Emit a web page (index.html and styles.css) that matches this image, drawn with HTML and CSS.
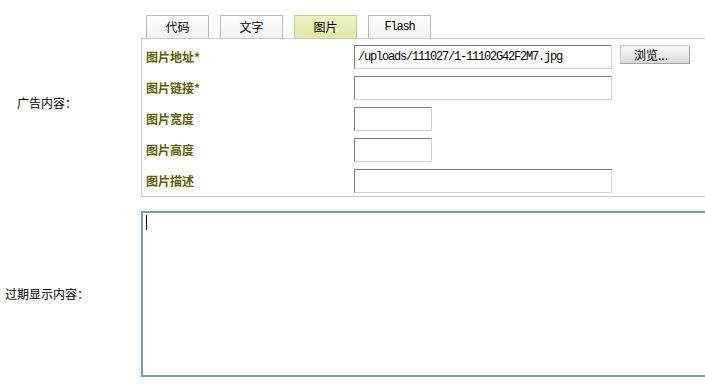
FILE: index.html
```html
<!DOCTYPE html>
<html lang="zh-CN">
<head>
  <meta charset="UTF-8" />
  <title>广告内容</title>
  <link rel="stylesheet" href="styles.css">
</head>
<body>
  <div class="form">
    <div class="row row-ad">
      <div class="label">广告内容：</div>
      <div class="field">
        <!-- tab switch -->
        <div class="tabs">
          <span class="tab">代码</span>
          <span class="tab">文字</span>
          <span class="tab active">图片</span>
          <span class="tab mono">Flash</span>
        </div>
        <div class="panel">
          <div class="prow">
            <span class="plabel">图片地址*</span>
            <span class="input wide mono">/uploads/111027/1-11102G42F2M7.jpg</span>
            <button class="browse">浏览...</button>
          </div>
          <div class="prow">
            <span class="plabel">图片链接*</span>
            <span class="input wide"></span>
          </div>
          <div class="prow">
            <span class="plabel">图片宽度</span>
            <span class="input small"></span>
          </div>
          <div class="prow">
            <span class="plabel">图片高度</span>
            <span class="input small"></span>
          </div>
          <div class="prow">
            <span class="plabel">图片描述</span>
            <span class="input wide"></span>
          </div>
        </div>
      </div>
    </div>

    <div class="row row-expire">
      <div class="label">过期显示内容：</div>
      <div class="field">
        <div class="editor"><span class="caret"></span></div>
      </div>
    </div>
  </div>
</body>
</html>
```

FILE: styles.css
```css
body { margin: 0; overflow: hidden; background: #fff; font-family: "Noto Sans CJK SC", "Liberation Sans", sans-serif; font-size: 12px; color: #000; }

.row { display: grid; grid-template-columns: 94px 1fr; align-items: center; }
.row-ad { padding-top: 8px; }
.row-expire { margin-top: 14px; }
.label { text-align: center; line-height: 16px; white-space: nowrap; }
.field { padding-left: 47px; }
.row-ad .field { padding-top: 7px; }

.mono { font-family: "Liberation Mono", monospace; letter-spacing: -1.2px; }

/* tabs */
.tabs { display: flex; gap: 11px; margin-left: 5px; }
.tab {
  width: 61px;
  height: 22px;
  line-height: 22px;
  text-align: center;
  border: 1px solid #b9b9b9;
  border-bottom: none;
  background: linear-gradient(#ffffff, #f2f2f2);
}
.tab.active { background: linear-gradient(#eef2c4, #e2e8a8); border-color: #c4c8a0; }

/* picture panel */
.panel {
  width: 620px;
  border: 1px solid #c9c9c9;
  padding: 2px 0 0 4px;
}
.prow { display: flex; align-items: center; height: 31px; }
.plabel { width: 208px; color: #5e5e08; font-weight: bold; line-height: 16px; }
.input {
  box-sizing: border-box;
  height: 24px;
  line-height: 22px;
  padding-left: 3px;
  border: 1px solid #d2d2d2;
  border-top-color: #7c7c7c;
  border-left-color: #7c7c7c;
  background: #fff;
  white-space: nowrap;
}
.input.wide { width: 258px; }
.input.small { width: 78px; }
.browse {
  margin: 0 0 5px 8px;
  width: 70px;
  height: 19px;
  padding: 0 0 0 13px;
  text-align: left;
  font: inherit;
  line-height: 17px;
  color: #000;
  border: 1px solid #c6c6c6;
  border-right-color: #a4a4a4;
  border-bottom-color: #a4a4a4;
  background: linear-gradient(#fbfbfb, #d9d9d9);
}

/* expired content editor */
.editor {
  width: 640px;
  height: 166px;
  box-sizing: border-box;
  padding: 2px 0 0 3px;
  border: 2px solid #75a2a2;
  box-shadow: 0 0 0 1px #e0f3f3;
}
.caret { display: block; width: 1px; height: 15px; background: #000; }
```
